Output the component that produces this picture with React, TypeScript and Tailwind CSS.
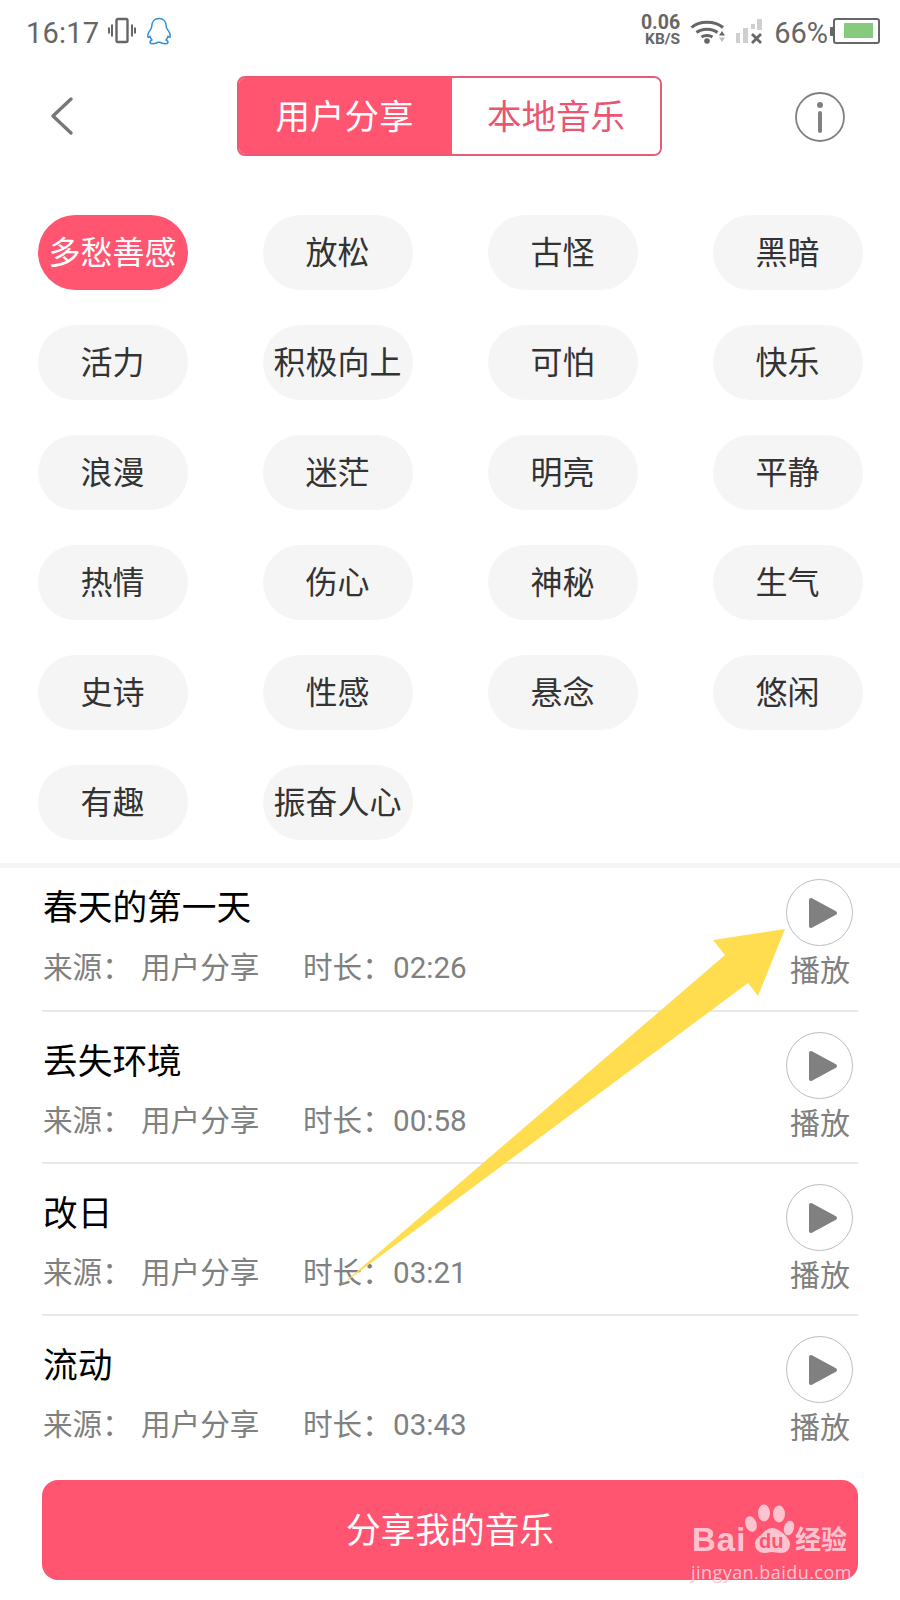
import React from 'react';

const chips = [
  '多愁善感', '放松', '古怪', '黑暗',
  '活力', '积极向上', '可怕', '快乐',
  '浪漫', '迷茫', '明亮', '平静',
  '热情', '伤心', '神秘', '生气',
  '史诗', '性感', '悬念', '悠闲',
  '有趣', '振奋人心',
];

const tracks = [
  { title: '春天的第一天', time: '02:26' },
  { title: '丢失环境', time: '00:58' },
  { title: '改日', time: '03:21' },
  { title: '流动', time: '03:43' },
];

const StatusBar = () => (
  <div className="h-[64px] pt-[2px] flex items-center justify-between pl-[26px] pr-[20px] text-[#666666]">
    <div className="flex items-center">
      <span className="text-[29px] leading-none tracking-[0.2px]">16:17</span>
      <svg width="28" height="28" viewBox="0 0 28 28" className="ml-[9px] mb-[4px]" fill="none" stroke="#666666">
        <rect x="8.5" y="2" width="11" height="23" rx="1.5" strokeWidth="2.4" />
        <path d="M4 7.500v12M1 10.500v6M24 7.500v12M27 10.500v6" strokeWidth="2" />
      </svg>
      <svg width="26" height="29" viewBox="0 0 26 29" className="ml-[10px] mb-[4px]" fill="none" stroke="#2f8fdc" strokeWidth="1.5" strokeLinejoin="round">
        <path d="M13 1.5c-4.6 0-7.2 3.4-7.2 7.6 0 1.3-.3 2.1-1 3-1.8 2.3-3.3 5-3 7.4.2 1.2 1 1.2 2.3-.2.3 1.500 1 2.700 1.900 3.700-1.800.8-2.300 1.900-1.800 2.800.6 1.100 3.800 1.100 6.300.2.800-.3 1.300-.8 1.500-.8h2c.2 0 .7.5 1.500.8 2.500.9 5.700.9 6.300-.2.500-.9 0-2-1.800-2.800.9-1 1.600-2.200 1.900-3.700 1.300 1.400 2.100 1.400 2.300.2.300-2.400-1.200-5.100-3-7.400-.7-.9-1-1.700-1-3 0-4.200-2.600-7.600-7.200-7.600z" />
      </svg>
    </div>
    <div className="flex items-center">
      <div className="flex flex-col items-end mr-[10px] mb-[5px] text-[#666666] font-bold">
        <span className="text-[19.5px] leading-[18px]">0.06</span>
        <span className="text-[15.5px] leading-[15px]">KB/S</span>
      </div>
      <svg width="36" height="28" viewBox="0 0 36 28" className="mr-[9px]">
        <path d="M1.500 8.500C9 1.500 25 1.500 33 8.500" fill="none" stroke="#666666" strokeWidth="3" />
        <path d="M6.500 13.500C12 9 22 9 27.500 13.500" fill="none" stroke="#666666" strokeWidth="3" />
        <path d="M11.500 18C14.500 16 19.500 16 22.500 18" fill="none" stroke="#666666" strokeWidth="3" />
        <circle cx="17" cy="22" r="2.800" fill="#666666" />
        <path d="M32 12l3 4.500h-6z" fill="#666666" />
        <path d="M32 23l3-4.500h-6z" fill="#bdbdbd" />
      </svg>
      <svg width="28" height="28" viewBox="0 0 28 28" className="mr-[11px]">
        <rect x="1" y="14" width="4" height="10" fill="#cfcfcf" />
        <rect x="8" y="9" width="5" height="15" fill="#cfcfcf" />
        <rect x="16" y="5" width="4" height="5" fill="#cfcfcf" />
        <rect x="22" y="0" width="5" height="11" fill="#cfcfcf" />
        <path d="M17 15l9 9M26 15l-9 9" stroke="#666666" strokeWidth="2.800" />
      </svg>
      <span className="text-[29px] leading-none">66%</span>
      <svg width="50" height="26" viewBox="0 0 50 26" className="ml-[2px] mb-[4px]">
        <rect x="0" y="9" width="4" height="9" rx="1" fill="#666666" />
        <rect x="4" y="1" width="45" height="24" rx="2" fill="#fff" stroke="#666666" strokeWidth="2" />
        <rect x="14" y="5" width="29" height="15" fill="#86cb7d" />
      </svg>
    </div>
  </div>
);

const Header = () => (
  <div className="h-[92px] pt-[12px] pl-[48px] pr-[55px] flex items-start justify-between">
    <svg width="28" height="40" viewBox="0 0 28 40" className="mt-[20px]" fill="none" stroke="#777777" strokeWidth="3.400" strokeLinecap="round" strokeLinejoin="round">
      <path d="M23 3L5 20l18 17" />
    </svg>
    <div className="flex w-[425px] h-[80px] rounded-[8px] border-2 border-[#e85a75] overflow-hidden ml-[28px]">
      <div className="w-[213px] pt-[3px] pr-[2px] bg-[#ff5570] text-white text-[34.5px] flex items-center justify-center">用户分享</div>
      <div className="flex-1 pt-[3px] bg-white text-[#ea5672] text-[34.5px] flex items-center justify-center">本地音乐</div>
    </div>
    <svg width="50" height="50" viewBox="0 0 50 50" className="mt-[16px]" fill="none">
      <circle cx="25" cy="25" r="24" stroke="#808080" strokeWidth="1.800" />
      <circle cx="25" cy="13" r="3" fill="#808080" />
      <path d="M25 21v18" stroke="#808080" strokeWidth="4" strokeLinecap="round" />
    </svg>
  </div>
);

const PlayButton = () => (
  <div className="flex flex-col items-center w-[66px]">
    <div className="w-[67px] h-[67px] rounded-full border-[1.5px] border-[#bdbdbd] flex items-center justify-center shrink-0">
      <svg width="30" height="32" viewBox="0 0 30 32" className="ml-[8px]">
        <path d="M3 3l24 13L3 29z" fill="#808080" stroke="#808080" strokeWidth="4" strokeLinejoin="round" />
      </svg>
    </div>
    <span className="mt-[5px] ml-[2px] text-[30px] leading-[40px] text-[#808080] whitespace-nowrap">播放</span>
  </div>
);

const TrackRow = ({ title, time, first, last }: { title: string; time: string; first: boolean; last: boolean }) => (
  <div className={`flex justify-between pr-[6px] ${first ? 'h-[144px] pt-[20px]' : 'h-[152px] pt-[30px]'} ${last ? '' : 'border-b-2 border-[#e8e8e8]'}`}>
    <div className="pl-[1px]">
      <div className="text-[34.7px] leading-[40px] text-black">{title}</div>
      <div className={`flex text-[29.6px] leading-[40px] text-[#808080] ${first ? 'mt-[20px]' : 'mt-[19px]'}`}>
        <span className="w-[98px]">来源：</span>
        <span className="w-[162px]">用户分享</span>
        <span className="w-[90px]">时长：</span>
        <span>{time}</span>
      </div>
    </div>
    <div className={first ? '-mt-[9px]' : '-mt-[10px]'}>
      <PlayButton />
    </div>
  </div>
);

const Watermark = () => (
  <div className="absolute left-[690px] top-[1504px] w-[170px] h-[80px] text-[#fdc4d0]">
    <svg width="52" height="52" viewBox="0 0 52 52" className="absolute left-[55px] top-0" fill="currentColor">
      <ellipse cx="6" cy="20" rx="5.500" ry="8" transform="rotate(-20 6 20)" />
      <ellipse cx="19" cy="9" rx="6" ry="8.500" />
      <ellipse cx="34" cy="10" rx="6" ry="8.500" />
      <ellipse cx="44" cy="24" rx="5" ry="7.500" transform="rotate(15 44 24)" />
      <path d="M27 24c-4 0-7 3-10 6-4 3-7 6-7 10 0 6 5 9 10 9 3 0 5-1 7-1s5 1 9 1c5 0 9-3 9-9 0-4-3-7-6-10-3-3-8-6-12-6z" />
    </svg>
    <span className="absolute left-[2px] top-[11px] text-[33px] leading-[50px] font-bold tracking-[1px]" style={{ fontFamily: '"Liberation Sans", sans-serif' }}>Bai</span>
    <span className="absolute left-[69px] top-[25px] text-[20px] leading-[24px] font-bold text-[#ff5570]" style={{ fontFamily: '"Liberation Sans", sans-serif' }}>du</span>
    <span className="absolute left-[105px] top-[16px] text-[26px] leading-[40px] font-bold whitespace-nowrap">经验</span>
    <span className="absolute left-[1px] top-[56px] text-[18px] leading-[24px] tracking-[0.45px] whitespace-nowrap" style={{ fontFamily: '"Open Sans", sans-serif' }}>jingyan.baidu.com</span>
  </div>
);

const App: React.FC = () => {
  return (
    <div className="relative w-[900px] h-[1600px] bg-white overflow-hidden" style={{ fontFamily: 'Roboto, "Noto Sans CJK SC", sans-serif' }}>
      <StatusBar />
      <Header />

      {/* Mood tags */}
      <div className="h-[707px] pt-[59px] pl-[37.5px] grid grid-cols-[repeat(4,150px)] gap-x-[75px] gap-y-[35px] content-start">
        {chips.map((c, i) => (
          <div
            key={c}
            className={`h-[75px] pt-[1px] rounded-full flex items-center justify-center text-[32px] whitespace-nowrap ${i === 0 ? 'bg-[#ff5570] text-white' : 'bg-[#f5f5f5] text-[#333333]'}`}
          >
            {c}
          </div>
        ))}
      </div>
      <div className="h-[5px] bg-[#f5f5f5]" />

      {/* Track list */}
      <div className="px-[42px]">
        {tracks.map((t, i) => (
          <TrackRow key={t.title} title={t.title} time={t.time} first={i === 0} last={i === tracks.length - 1} />
        ))}
        <div className="mt-[12px] h-[100px] pt-[2px] rounded-[16px] bg-[#ff5570] text-white text-[34.7px] flex items-center justify-center">
          分享我的音乐
        </div>
      </div>

      {/* Yellow annotation arrow */}
      <svg width="900" height="1600" viewBox="0 0 900 1600" className="absolute left-0 top-0 pointer-events-none">
        <path d="M785 929L758 996L748 983L340 1286L725 955L713 940Z" fill="#ffdd4f" />
      </svg>

      <Watermark />
    </div>
  );
};

export default App;
